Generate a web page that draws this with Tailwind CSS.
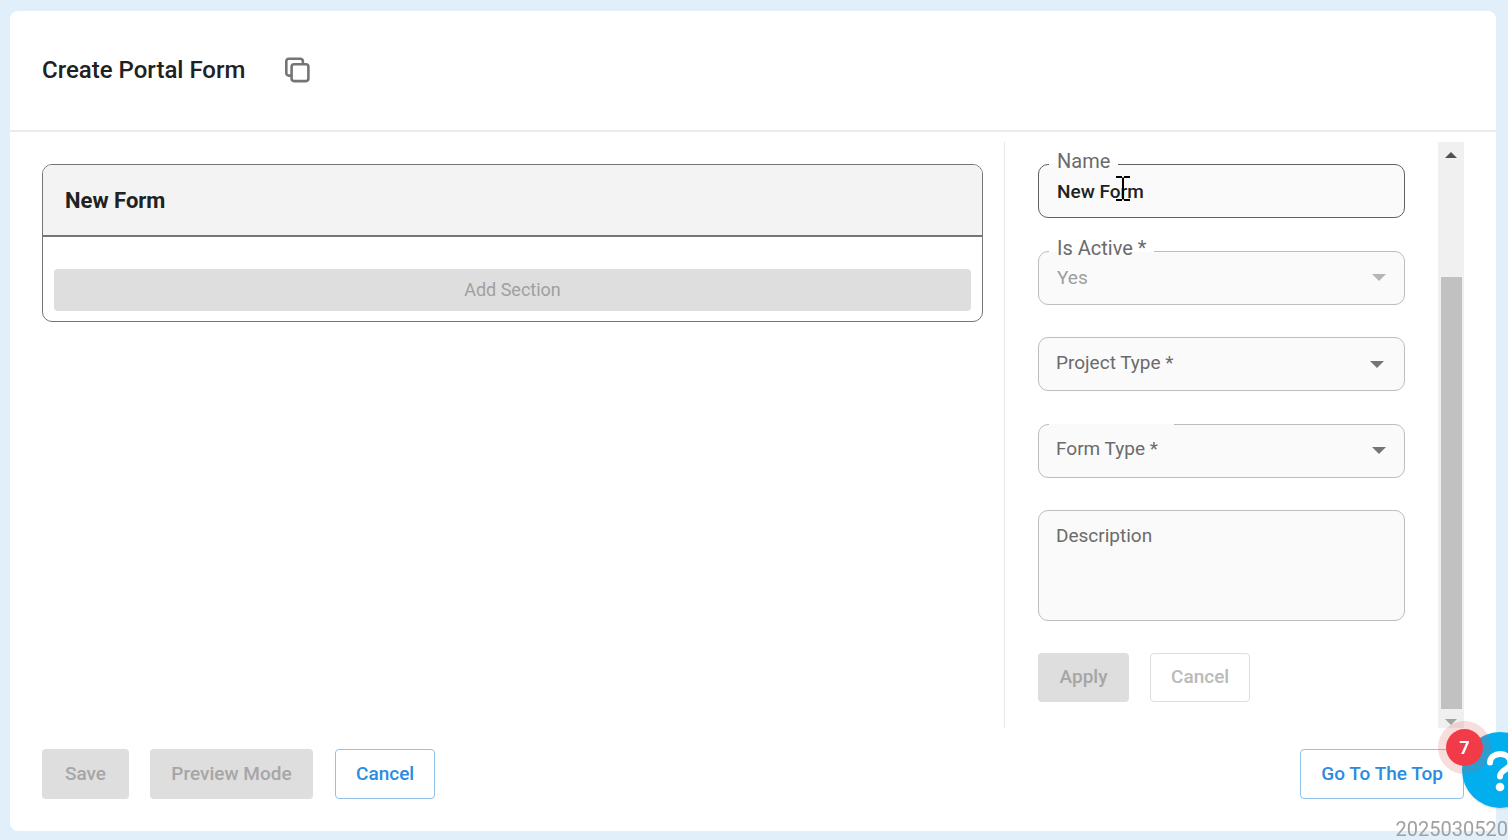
<!DOCTYPE html>
<html lang="en">
<head>
    <meta charset="UTF-8">
    <meta name="viewport" content="width=device-width, initial-scale=1.0">
    <title>Create Portal Form</title>
    <script src="https://cdn.jsdelivr.net/npm/@tailwindcss/browser@4"></script>
</head>
<body class="bg-[#e1effa] font-[Roboto,sans-serif] text-[#212121] overflow-hidden">
    <div class="relative min-h-screen flex flex-col pt-[11px] pb-[9px] pl-[10px] pr-3">
        <main class="flex-1 flex flex-col bg-white rounded-lg">
            <!-- Header -->
            <header class="h-[121px] flex items-center gap-10 px-8 pb-[2px] border-b-2 border-[#ebebeb]">
                <h1 class="text-2xl font-medium">Create Portal Form</h1>
                <button aria-label="Copy form" class="text-[#757575]">
                    <svg class="size-[26px]" viewBox="0 0 26 26" fill="none" stroke="currentColor" stroke-width="2.6" stroke-linejoin="round">
                        <rect x="6.600" y="7.300" width="16.800" height="16.800" rx="2.5"/>
                        <path d="M6.600 18.600H3.800A2.5 2.5 0 0 1 1.300 16.100V4.300A2.5 2.5 0 0 1 3.800 1.800H15.400A2.5 2.5 0 0 1 17.900 4.300V7.300"/>
                    </svg>
                </button>
            </header>

            <!-- Form builder -->
            <div class="flex-1 flex mt-[10px] pl-8 pr-8">
                <section class="flex-1 pt-[22px] pr-[21px]">
                    <div class="border border-[#757575] rounded-[10px] overflow-hidden">
                        <h2 class="h-[72px] flex items-center px-[22px] bg-[#f3f3f3] border-b-2 border-[#757575] text-[22px] font-bold">New Form</h2>
                        <div class="pt-8 px-[11px] pb-[10px]">
                            <button disabled class="w-full h-[42px] rounded bg-[#dedede] text-[#a0a0a0] text-lg">Add Section</button>
                        </div>
                    </div>
                </section>

                <!-- Properties panel -->
                <aside class="w-[460px] flex border-l border-[#e8e8e8]">
                    <form class="flex-1 pt-[22px] pl-[33px] pr-[33px]">
                        <div class="relative mb-[33px]">
                            <input id="name" type="text" value="New Form" class="block w-full h-[54px] px-[18px] bg-[#fafafa] border border-[#616161] rounded-[10px] text-[19px] font-medium">
                            <label for="name" class="absolute left-[11px] -top-4 h-[17px] px-2 bg-white text-xl leading-[26px] text-[#6b6b6b]">Name</label>
                        </div>
                        <div class="relative mb-8">
                            <select id="active" disabled class="block w-full h-[54px] px-[18px] appearance-none bg-[#fafafa] border border-[#bdbdbd] rounded-[10px] text-[19px] text-[#9e9e9e] opacity-100">
                                <option>Yes</option>
                            </select>
                            <label for="active" class="absolute left-[11px] -top-4 h-[17px] px-2 bg-white text-xl leading-[26px] text-[#6b6b6b]">Is Active *</label>
                            <svg class="absolute right-[19px] top-[23px] w-[14px] h-[7px] text-[#b5b5b5] pointer-events-none" viewBox="0 0 14 7" fill="currentColor"><path d="M0 0H14L7 7Z"/></svg>
                        </div>
                        <div class="relative mb-[33px]">
                            <select id="project" class="block w-full h-[54px] px-[18px] appearance-none bg-[#fafafa] border border-[#bdbdbd] rounded-[10px] text-[19px]">
                                <option></option>
                            </select>
                            <label for="project" class="absolute left-[18px] top-[13px] text-[19px] leading-[26px] text-[#6b6b6b]">Project Type *</label>
                            <svg class="absolute right-[21px] top-6 w-[14px] h-[7px] text-[#757575] pointer-events-none" viewBox="0 0 14 7" fill="currentColor"><path d="M0 0H14L7 7Z"/></svg>
                        </div>
                        <div class="relative mb-8">
                            <select id="form-type" class="block w-full h-[54px] px-[18px] appearance-none bg-[#fafafa] border border-[#bdbdbd] rounded-[10px] text-[19px]">
                                <option></option>
                            </select>
                            <span class="absolute left-[11px] top-0 w-[125px] h-px bg-[#fafafa]"></span>
                            <label for="form-type" class="absolute left-[18px] top-3 text-[19px] leading-[26px] text-[#6b6b6b]">Form Type *</label>
                            <svg class="absolute right-[19px] top-[23px] w-[14px] h-[7px] text-[#757575] pointer-events-none" viewBox="0 0 14 7" fill="currentColor"><path d="M0 0H14L7 7Z"/></svg>
                        </div>
                        <div class="relative mb-8">
                            <textarea id="description" class="block w-full h-[111px] px-[18px] py-3 resize-none bg-[#fafafa] border border-[#bdbdbd] rounded-[10px] text-[19px]"></textarea>
                            <label for="description" class="absolute left-[18px] top-[13px] text-[19px] leading-[26px] text-[#6b6b6b]">Description</label>
                        </div>
                        <div class="flex gap-[21px] text-[19px] font-medium">
                            <button type="button" disabled class="h-[49px] min-w-[91px] px-[21px] rounded bg-[#dedede] text-[#a6a6a6]">Apply</button>
                            <button type="button" disabled class="h-[49px] px-5 rounded border border-[#dedede] text-[#bababa]">Cancel</button>
                        </div>
                    </form>
                    <!-- Scroll track -->
                    <div class="w-[26px] flex flex-col items-center justify-between bg-[#f0f0f0]">
                        <svg class="w-3 h-[6px] mt-[10px] shrink-0" viewBox="0 0 12 6" fill="#505050"><path d="M0 6H12L6 0Z"/></svg>
                        <div class="w-[21px] flex-1 mt-[119px] mb-[10px] bg-[#c1c1c1]"></div>
                        <svg class="w-3 h-[6px] mb-[3px] shrink-0" viewBox="0 0 12 6" fill="#a3a3a3"><path d="M0 0H12L6 6Z"/></svg>
                    </div>
                </aside>
            </div>

            <!-- Footer actions -->
            <footer class="flex items-center mt-[21px] mb-8 px-8 text-[19px] font-medium">
                <button disabled class="h-[50px] min-w-[87px] px-[21px] rounded bg-[#dedede] text-[#a6a6a6]">Save</button>
                <button disabled class="h-[50px] min-w-[163px] px-[21px] ml-[21px] rounded bg-[#dedede] text-[#a6a6a6]">Preview Mode</button>
                <button class="h-[50px] px-5 ml-[22px] rounded border border-[#90c3ea] text-[#2b8ce0]">Cancel</button>
                <button class="h-[50px] px-5 ml-auto rounded border border-[#90c3ea] text-[#2b8ce0]">Go To The Top</button>
            </footer>
        </main>
    </div>

    <!-- Help widget -->
    <button aria-label="Help" class="fixed -right-[30px] bottom-8 size-[76px] rounded-full bg-[#03aeef] shadow-sm">
        <svg class="size-[76px]" viewBox="0 0 76 76" fill="none" stroke="#fff" stroke-width="6" stroke-linecap="round">
            <path d="M28 30.500C28 19 48.500 19 48.500 31C48.500 38 38 37 38 44.500"/>
            <circle cx="38" cy="55" r="4.300" fill="#fff" stroke="none"/>
        </svg>
    </button>
    <span class="fixed right-[25px] bottom-[74px] size-[37px] rounded-full bg-[#f23b48] ring-8 ring-[#d9534f]/20 flex items-center justify-center text-white text-lg font-bold">7</span>
    <span class="fixed right-0 bottom-0 text-xl leading-[22px] text-[#a0a0a0]">2025030520</span>

    <!-- Text cursor -->
    <svg class="fixed left-[1116px] top-[176px] w-[14px] h-[25px] pointer-events-none" viewBox="0 0 14 25" fill="none" stroke="#000" stroke-width="2">
        <path d="M0 1H6M8 1H14M0 24H6M8 24H14M7 1.500V23.500"/>
    </svg>
</body>
</html>
